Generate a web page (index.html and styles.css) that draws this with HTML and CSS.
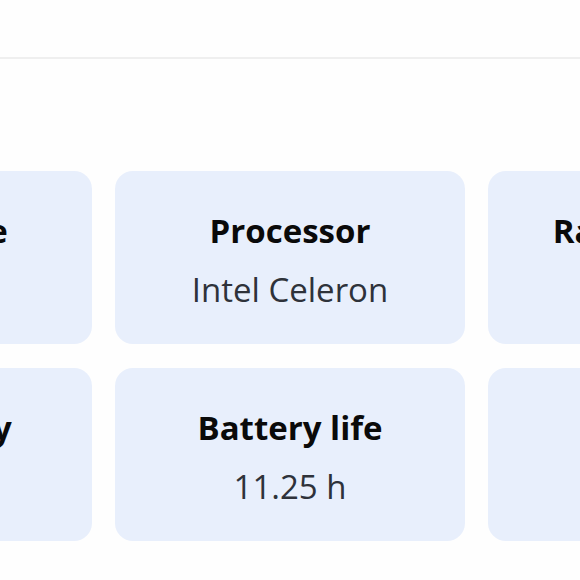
FILE: index.html
```html
<!DOCTYPE html>
<html lang="en">
<head>
    <meta charset="UTF-8">
    <meta name="viewport" content="width=device-width, initial-scale=1.0">
    <title>Specs</title>
    <link rel="stylesheet" href="styles.css">
</head>
<body>
    <header class="top-bar"></header>

    <section class="specs">
        <div class="spec-card">
            <div class="spec-title">Screen size</div>
            <div class="spec-value">14 in</div>
        </div>
        <div class="spec-card">
            <div class="spec-title">Processor</div>
            <div class="spec-value">Intel Celeron</div>
        </div>
        <div class="spec-card">
            <div class="spec-title">Ram capacity</div>
            <div class="spec-value">4 GB</div>
        </div>
        <div class="spec-card">
            <div class="spec-title">SD memory</div>
            <div class="spec-value">64 GB</div>
        </div>
        <div class="spec-card">
            <div class="spec-title">Battery life</div>
            <div class="spec-value">11.25 h</div>
        </div>
        <div class="spec-card">
            <div class="spec-title">Weight</div>
            <div class="spec-value">1.3 kg</div>
        </div>
    </section>
</body>
</html>
```

FILE: styles.css
```css
body {
    font-family: "Open Sans", "Noto Sans", sans-serif;
    margin: 0;
    padding: 0;
    height: 100vh;
    overflow: hidden;
    background-color: #fefefe;
}

.top-bar {
    height: 57px;
    border-bottom: 2px solid #efefef;
    background-color: #fefefe;
}

.specs {
    display: grid;
    grid-template-columns: repeat(3, 350px);
    grid-auto-rows: 173px;
    gap: 24px 23px;
    justify-content: center;
    margin-top: 112px;
}

.spec-card {
    background-color: #e8effc;
    border-radius: 18px;
    display: flex;
    flex-direction: column;
    align-items: center;
    justify-content: center;
    gap: 19px;
    padding-top: 5px;
    box-sizing: border-box;
    white-space: nowrap;
}

.spec-title {
    font-size: 33px;
    line-height: 40px;
    font-weight: bold;
    color: #0a0a0a;
}

.spec-value {
    font-size: 33px;
    line-height: 40px;
    color: #2e323a;
}
```
